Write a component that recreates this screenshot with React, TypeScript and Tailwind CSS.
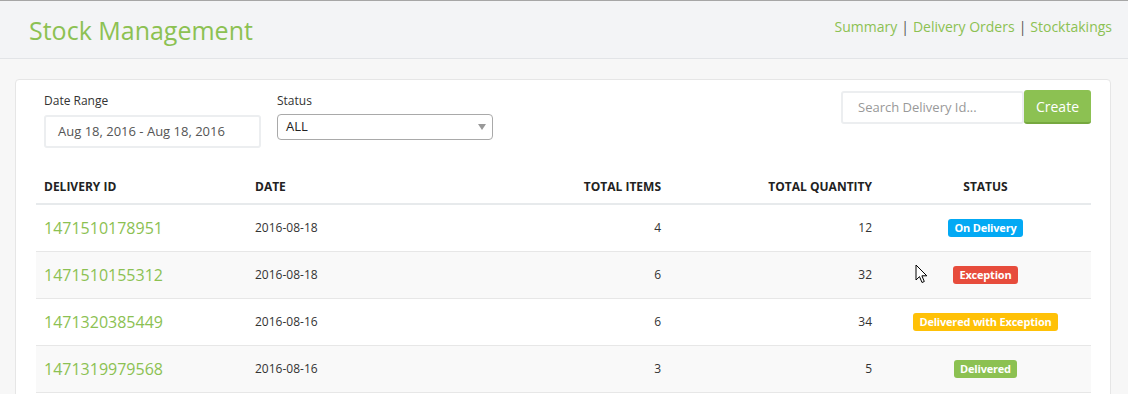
import { useState } from 'react';

type Status = 'On Delivery' | 'Exception' | 'Delivered with Exception' | 'Delivered';

interface DeliveryRow {
  id: string;
  date: string;
  items: number;
  quantity: number;
  status: Status;
}

const ROWS: DeliveryRow[] = [
  { id: '1471510178951', date: '2016-08-18', items: 4, quantity: 12, status: 'On Delivery' },
  { id: '1471510155312', date: '2016-08-18', items: 6, quantity: 32, status: 'Exception' },
  { id: '1471320385449', date: '2016-08-16', items: 6, quantity: 34, status: 'Delivered with Exception' },
  { id: '1471319979568', date: '2016-08-16', items: 3, quantity: 5, status: 'Delivered' },
];

const STATUS_CLASS: Record<Status, string> = {
  'On Delivery': 'bg-[#03a9f4]',
  Exception: 'bg-[#e74c3c]',
  'Delivered with Exception': 'bg-[#ffc107]',
  Delivered: 'bg-[#8cc152]',
};

function Cursor() {
  return (
    <svg
      className="pointer-events-none absolute left-[915px] top-[263px]"
      width="14"
      height="21"
      viewBox="0 0 14 21"
    >
      <path
        d="M1 1 L1 16 L4.5 12.6 L7 18.5 L9.3 17.5 L6.9 11.8 L11.8 11.8 Z"
        fill="#fff"
        stroke="#000"
        strokeWidth="1"
        strokeLinejoin="miter"
      />
    </svg>
  );
}

export default function App() {
  const [search, setSearch] = useState('');

  return (
    <div className="relative min-h-screen border-t border-[#a6a6a6] bg-[#f7f7f7] font-['Open_Sans',sans-serif]">
      {/* Page header */}
      <div className="flex h-[58px] items-center justify-between border-b border-[#e2e4e7] bg-[#f3f4f6] pl-[29px] pr-[16px]">
        <h1 className="mt-[1px] text-[25px] font-normal leading-none text-[#8cc152]">Stock Management</h1>
        <div className="-mt-[7px] flex items-center gap-[4px] text-[14px] text-[#8cc152]">
          <a>Summary</a>
          <span className="text-[#555]">|</span>
          <a>Delivery Orders</a>
          <span className="text-[#555]">|</span>
          <a>Stocktakings</a>
        </div>
      </div>

      <div className="pl-[15px] pr-[17px] pt-[20px]">
        <div className="rounded-[4px] border border-[#e6e6e6] bg-white pb-[8px] pl-[20px] pr-[19px] pt-[10px]">
          {/* Filters */}
          <div className="flex items-start justify-between">
            <div className="flex gap-[16px] pl-[8px] pt-[2px]">
              <div className="flex flex-col">
                <label className="text-[12px] leading-[17px] text-[#333]">Date Range</label>
                <div className="mt-[6px] flex h-[33px] w-[217px] items-center rounded-[3px] border-2 border-[#eceef0] pl-[12px] text-[13px] text-[#555]">
                  Aug 18, 2016 - Aug 18, 2016
                </div>
              </div>
              <div className="flex flex-col">
                <label className="text-[12px] leading-[17px] text-[#333]">Status</label>
                <div className="mt-[5px] flex h-[26px] w-[216px] items-center justify-between rounded-[4px] border border-[#a9a9a9] pl-[8px] pr-[6px] text-[13px] text-[#222]">
                  <span>ALL</span>
                  <svg width="8" height="6" viewBox="0 0 8 6">
                    <path d="M0 0 L8 0 L4 6 Z" fill="#999" />
                  </svg>
                </div>
              </div>
            </div>
            <div className="flex items-center">
              <input
                value={search}
                onChange={(e) => setSearch(e.target.value)}
                placeholder="Search Delivery Id..."
                className="h-[33px] w-[183px] rounded-[3px] border-2 border-[#eceef0] pl-[15px] text-[13px] text-[#555] outline-none placeholder:text-[#999]"
              />
              <button
                type="button"
                className="h-[34px] w-[67px] rounded-[3px] border-b-2 border-[#76a83f] bg-[#8cc152] text-[14px] text-white"
              >
                Create
              </button>
            </div>
          </div>

          {/* Table */}
          <table className="mt-[23px] w-full table-fixed border-collapse">
            <thead>
              <tr className="border-b-2 border-[#e7eaec] text-[12px] font-bold uppercase text-[#222]">
                <th className="h-[33px] px-[8px] text-left font-bold">Delivery ID</th>
                <th className="px-[8px] text-left font-bold">Date</th>
                <th className="px-[8px] text-right font-bold">Total Items</th>
                <th className="px-[8px] text-right font-bold">Total Quantity</th>
                <th className="px-[8px] text-center font-bold">Status</th>
              </tr>
            </thead>
            <tbody>
              {ROWS.map((row, i) => (
                <tr
                  key={row.id}
                  className={`border-b border-[#e7e7e7] ${i % 2 === 1 ? 'bg-[#f9f9f9]' : 'bg-white'}`}
                >
                  <td className="h-[47px] px-[8px] text-[16px] text-[#8cc152]">{row.id}</td>
                  <td className="px-[8px] text-[12px] text-[#333]">{row.date}</td>
                  <td className="px-[8px] text-right text-[12px] text-[#333]">{row.items}</td>
                  <td className="px-[8px] text-right text-[12px] text-[#333]">{row.quantity}</td>
                  <td className="px-[8px] text-center leading-none">
                    <span
                      className={`inline-block rounded-[3px] px-[6px] align-middle text-[11px] font-bold leading-[18px] tracking-[-0.2px] text-white ${STATUS_CLASS[row.status]}`}
                    >
                      {row.status}
                    </span>
                  </td>
                </tr>
              ))}
            </tbody>
          </table>
        </div>
      </div>

      <Cursor />
    </div>
  );
}
